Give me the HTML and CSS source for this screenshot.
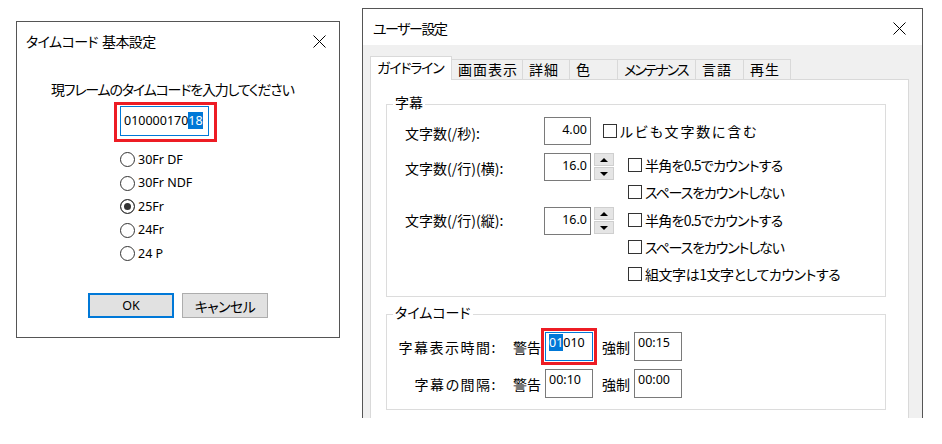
FILE: index.html
```html
<!DOCTYPE html>
<html lang="ja">
<head>
   <meta charset="UTF-8">
   <title>設定</title>
   <link rel="stylesheet" href="styles.css">
</head>
<body>
<div class="screen">

   <div class="dlg tc-dlg">
      <div class="dlg-title">
         <span class="tight">タイムコード<span class="gap"></span>基本設定</span>
         <svg class="close" viewBox="0 0 13 13"><path d="M0.5 0.5L12.5 12.5M12.5 0.5L0.5 12.5" stroke="#000" stroke-width="1"/></svg>
      </div>
      <div class="prompt">現フレームのタイムコードを入力してください</div>
      <div class="tc-hl">
         <div class="tc-input">010000170<span class="sel">18</span></div>
      </div>
      <div class="rates">
         <div class="radio"><i></i><span>30Fr DF</span></div>
         <div class="radio"><i></i><span>30Fr NDF</span></div>
         <div class="radio"><i class="on"></i><span>25Fr</span></div>
         <div class="radio"><i></i><span>24Fr</span></div>
         <div class="radio"><i></i><span>24 P</span></div>
      </div>
      <div class="btns">
         <div class="btn default latin">OK</div>
         <div class="btn tight">キャンセル</div>
      </div>
   </div>

   <div class="dlg us-dlg">
      <div class="dlg-title">
         <span class="us-name">ユーザー設定</span>
         <svg class="close" viewBox="0 0 13 13"><path d="M0.5 0.5L12.5 12.5M12.5 0.5L0.5 12.5" stroke="#000" stroke-width="1"/></svg>
      </div>
      <div class="us-body">
         <div class="tabs">
            <div class="tab on kana" style="width: 82px">ガイドライン</div>
            <div class="tab kanji" style="width: 72px">画面表示</div>
            <div class="tab kanji" style="width: 48px">詳細</div>
            <div class="tab" style="width: 49px">色</div>
            <div class="tab kana2" style="width: 79px">メンテナンス</div>
            <div class="tab kanji" style="width: 49px">言語</div>
            <div class="tab kanji" style="width: 48px">再生</div>
         </div>
         <div class="panel">
            <fieldset class="grp">
               <legend>字幕</legend>
               <div class="grp-in subs">
                  <div class="row r1">
                     <div class="lbl">文字数(/秒):</div>
                     <div class="num">4.00</div>
                     <div class="cb first"><i></i><span class="wide">ルビも文字数に含む</span></div>
                  </div>
                  <div class="row r2">
                     <div class="lbl">文字数(/行)(横):</div>
                     <div class="num">16.0</div>
                     <div class="spin"><b><em class="up"></em></b><b><em class="dn"></em></b></div>
                     <div class="cbs">
                        <div class="cb"><i></i><span>半角を0.5でカウントする</span></div>
                        <div class="cb"><i></i><span class="kana">スペースをカウントしない</span></div>
                     </div>
                  </div>
                  <div class="row r3">
                     <div class="lbl">文字数(/行)(縦):</div>
                     <div class="num">16.0</div>
                     <div class="spin"><b><em class="up"></em></b><b><em class="dn"></em></b></div>
                     <div class="cbs">
                        <div class="cb"><i></i><span>半角を0.5でカウントする</span></div>
                        <div class="cb"><i></i><span class="kana">スペースをカウントしない</span></div>
                        <div class="cb"><i></i><span class="mixed">組文字は1文字としてカウントする</span></div>
                     </div>
                  </div>
               </div>
            </fieldset>
            <fieldset class="grp tc-grp">
               <legend>タイムコード</legend>
               <div class="grp-in times">
                  <div class="trow">
                     <div class="tlbl">字幕表示時間:</div>
                     <div class="warn">警告</div>
                     <div class="hl"><div class="time focus"><span class="sel">01</span>010</div></div>
                     <div class="force">強制</div>
                     <div class="time">00:15</div>
                  </div>
                  <div class="trow">
                     <div class="tlbl">字幕の間隔:</div>
                     <div class="warn">警告</div>
                     <div class="hl off"><div class="time">00:10</div></div>
                     <div class="force">強制</div>
                     <div class="time">00:00</div>
                  </div>
               </div>
            </fieldset>
         </div>
      </div>
   </div>

</div>
</body>
</html>
```

FILE: styles.css
```css
* {
   box-sizing: border-box;
}

body {
   margin: 0;
   background: #fff;
   color: #000;
   font-family: "Noto Sans CJK JP", sans-serif;
   font-size: 14px;
   line-height: 18px;
   font-feature-settings: "palt";
}

.latin {
   font-family: "Noto Sans", "Noto Sans CJK JP", sans-serif;
   font-size: 12.5px;
}

.tight {
   letter-spacing: -0.6px;
}

.gap {
   display: inline-block;
   width: 4px;
}

.screen {
   display: flex;
   align-items: flex-start;
   padding-left: 16px;
}

.dlg {
   border: 1px solid #555;
   background: #fff;
}

.dlg-title {
   display: flex;
   align-items: center;
   justify-content: space-between;
}

.close {
   display: block;
   width: 13px;
   height: 13px;
}

/* timecode dialog */
.tc-dlg {
   width: 324px;
   height: 317px;
   margin-top: 21px;
   display: flex;
   flex-direction: column;
}

.tc-dlg .dlg-title {
   height: 38px;
   padding: 0 13px 0 9px;
}

.prompt {
   margin: 20px 0 0 34px;
   letter-spacing: -1.2px;
}

.tc-hl {
   width: 103px;
   height: 40px;
   margin: 4px 0 0 97px;
   padding: 1px 0 0 3px;
   border: 3px solid #ed1c24;
}

.tc-input {
   width: 89px;
   height: 30px;
   padding: 5px 0 0 3px;
   border: 1px solid #0078d7;
   font: 12.5px/18px "Noto Sans", sans-serif;
}

.sel {
   background: #0078d7;
   color: #fff;
}

.rates {
   margin: 6px 0 0 103px;
}

.radio {
   display: flex;
   align-items: center;
   gap: 3px;
   height: 23.5px;
   font: 12.5px/18px "Noto Sans", sans-serif;
}

.radio i {
   width: 15px;
   height: 15px;
   border: 1px solid #333;
   border-radius: 50%;
   background: #fff;
}

.radio i.on {
   background: #333;
   box-shadow: inset 0 0 0 3px #fff;
}

.btns {
   display: flex;
   gap: 8px;
   margin: 27.5px 0 0 71px;
}

.btn {
   width: 86px;
   height: 25px;
   display: flex;
   align-items: center;
   justify-content: center;
   background: #e1e1e1;
   border: 1px solid #adadad;
}

.btn.default {
   border: 2px solid #0078d7;
}

/* user settings dialog */
.us-dlg {
   width: 561px;
   height: 410px;
   margin: 8px 0 0 22px;
   border-bottom: none;
   display: flex;
   flex-direction: column;
   background: #f0f0f0;
}

.us-dlg .dlg-title {
   height: 36px;
   padding: 2px 16px 0 10px;
   background: #fff;
}

.us-name {
   letter-spacing: -1.5px;
}

.us-body {
   flex: 1;
   display: flex;
   flex-direction: column;
   padding: 11px 13px 0 7px;
}

.tabs {
   display: flex;
   align-items: flex-end;
   height: 23px;
}

.tab {
   height: 20px;
   margin-left: -1px;
   padding-left: 6px;
   border: 1px solid #d9d9d9;
   border-bottom: none;
   background: #f0f0f0;
   line-height: 19px;
   white-space: nowrap;
   overflow: hidden;
}

.tab.kanji {
   letter-spacing: 1px;
}

.tab.kana {
   letter-spacing: -1.2px;
}

.tab.kana2 {
   letter-spacing: -2px;
}

.tab.on {
   position: relative;
   z-index: 1;
   height: 24px;
   margin: 0 0 -1px 0;
   background: #fff;
   line-height: 20px;
}

.panel {
   flex: 1;
   padding: 14px 0 0 15px;
   background: #fff;
   border: 1px solid #d9d9d9;
   border-bottom: none;
}

.grp {
   width: 500px;
   min-width: 0;
   margin: 0;
   padding: 0;
   border: 1px solid #dcdcdc;
}

.grp legend {
   margin-left: 6px;
   padding: 0 2px 5px;
   line-height: 16px;
}

.tc-grp {
   margin-top: 7px;
}

.subs {
   padding: 2px 0 9px 18px;
}

.row {
   display: flex;
   align-items: flex-start;
}

.lbl {
   width: 139px;
}

.r1 {
   height: 28px;
   align-items: center;
   margin-bottom: 8px;
}

.r1 .lbl {
   padding-top: 4px;
}

.r2 .lbl {
   padding-top: 6px;
}

.r3 {
   margin-top: 2px;
}

.r3 .lbl {
   padding-top: 4px;
}

.num {
   width: 47px;
   height: 28px;
   padding: 3px 3px 0 0;
   border: 1px solid #7a7a7a;
   text-align: right;
   font: 12.5px/18px "Noto Sans", sans-serif;
}

.spin {
   display: flex;
   flex-direction: column;
   gap: 1px;
   margin-left: 3px;
}

.spin b {
   width: 20px;
   height: 13px;
   display: flex;
   align-items: center;
   justify-content: center;
   background: #e5e5e5;
   border: 1px solid #cfcfcf;
}

.spin em {
   width: 0;
   height: 0;
   border-left: 4px solid transparent;
   border-right: 4px solid transparent;
}

.spin em.up {
   border-bottom: 4px solid #000;
}

.spin em.dn {
   border-top: 4px solid #000;
}

.cbs {
   margin-left: 14px;
   margin-top: -2px;
}

.r3 .cbs {
   margin-top: -1px;
}

.cb {
   display: flex;
   align-items: center;
   gap: 3px;
   height: 27px;
   white-space: nowrap;
   letter-spacing: -0.75px;
}

.cb .kana {
   letter-spacing: -1.1px;
}

.cb .mixed {
   letter-spacing: -0.45px;
}

.cb .wide {
   letter-spacing: 1.8px;
}

.cb.first {
   margin-left: 12px;
}

.cb i {
   width: 14px;
   height: 14px;
   border: 1px solid #333;
   background: #fff;
}

.times {
   padding: 3px 0 11px 0;
}

.trow {
   display: flex;
   align-items: center;
   height: 37px;
}

.trow + .trow {
   height: 29px;
   margin-top: 4px;
}

.tlbl {
   width: 110px;
   text-align: right;
   letter-spacing: 1.5px;
}

.warn {
   margin-left: 16px;
}

.hl {
   padding: 1px;
   border: 3px solid #ed1c24;
}

.hl.off {
   padding: 0 1px;
   border-color: transparent;
}

.force {
   margin: 0 4px 0 5px;
}

.time {
   width: 48px;
   height: 29px;
   padding: 1px 0 0 3px;
   border: 1px solid #7a7a7a;
   background: #fff;
   font: 12.5px/18px "Noto Sans", sans-serif;
}

.time.focus {
   border-color: #0078d7;
}
```
